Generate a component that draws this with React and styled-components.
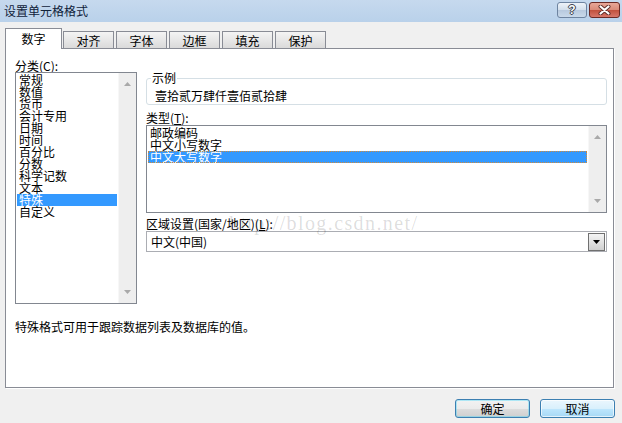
import styled, { createGlobalStyle } from 'styled-components'

const GlobalStyle = createGlobalStyle`
  html, body {
    margin: 0;
    padding: 0;
    background: #f0f0f0;
  }
  body {
    font-family: "Noto Sans CJK SC", "Liberation Sans", sans-serif;
    font-size: 12px;
    color: #000;
  }
`

const Dialog = styled.div`
  width: 622px;
  height: 423px;
  background: #f0f0f0;
  display: flex;
  flex-direction: column;
  overflow: hidden;
`

const TitleBar = styled.div`
  height: 22px;
  display: flex;
  justify-content: space-between;
  align-items: flex-start;
  padding: 0 2px 0 4px;
  background: linear-gradient(#c6d9ee, #b9d1ea);
`

const Title = styled.span`
  line-height: 22px;
  color: #10223a;
`

const Controls = styled.div`
  display: flex;
  gap: 2px;
  padding-top: 2px;
`

const HelpButton = styled.div`
  box-sizing: border-box;
  width: 30px;
  height: 16px;
  border: 1px solid #6e84a0;
  border-radius: 3px;
  background: linear-gradient(#eef3f9 0%, #d3dfec 50%, #b7c9de 51%, #c9d9ea 100%);
  display: flex;
  align-items: center;
  justify-content: center;
  font-family: "Liberation Sans", sans-serif;
  font-weight: bold;
  font-size: 12px;
  line-height: 12px;
  color: #fff;
  text-shadow: 0 0 1px #233, 1px 0 0 #445, -1px 0 0 #445, 0 1px 0 #445, 0 -1px 0 #445;
`

const CloseButton = styled.div`
  box-sizing: border-box;
  width: 31px;
  height: 16px;
  border: 1px solid #6b2a25;
  border-radius: 3px;
  background: linear-gradient(#e8a797 0%, #d98a78 50%, #c1503c 51%, #d7776a 100%);
  display: flex;
  align-items: center;
  justify-content: center;
`

const TabRow = styled.div`
  display: flex;
  align-items: flex-end;
  height: 20px;
  margin: 6px 0 0 5px;
`

const Tab = styled.div`
  box-sizing: border-box;
  width: ${p => (p.$active ? 57 : 51)}px;
  height: ${p => (p.$active ? 21 : 17)}px;
  margin-bottom: ${p => (p.$active ? -1 : 0)}px;
  margin-left: ${p => p.$gap}px;
  border: 1px solid #898c95;
  border-bottom: none;
  background: ${p => (p.$active ? '#fff' : 'linear-gradient(#f4f4f4, #dadada)')};
  display: flex;
  align-items: center;
  justify-content: center;
  line-height: 12px;
  padding-top: ${p => (p.$active ? 0 : 2)}px;
  position: relative;
  z-index: ${p => (p.$active ? 2 : 1)};
`

const Panel = styled.div`
  box-sizing: border-box;
  height: 340px;
  margin: 0 8px 0 5px;
  padding: 10px 6px 0 9px;
  background: #fff;
  border: 1px solid #898c95;
  box-shadow: 1px 1px 0 #fff;
  position: relative;
`

const Columns = styled.div`
  display: flex;
  gap: 9px;
`

const LeftCol = styled.div`
  width: 122px;
  display: flex;
  flex-direction: column;
`

const RightCol = styled.div`
  flex: 1;
  display: flex;
  flex-direction: column;
  padding-top: 13px;
`

const Label = styled.div`
  line-height: ${p => p.$lh || 13}px;
  margin-top: ${p => p.$mt || 0}px;
  white-space: nowrap;
`

const ListBox = styled.div`
  box-sizing: border-box;
  height: ${p => p.$h}px;
  border: 1px solid #828790;
  background: #fff;
  display: flex;
`

const Items = styled.div`
  flex: 1;
  padding: 1px;
`

const Item = styled.div`
  box-sizing: border-box;
  height: 12px;
  line-height: 12px;
  padding-left: 2px;
  white-space: nowrap;
  background: ${p => (p.$selected ? '#3399ff' : 'transparent')};
  color: ${p => (p.$selected ? '#fff' : '#000')};
  outline: ${p => (p.$focus ? '1px dotted #d08a3c' : 'none')};
  outline-offset: -1px;
`

const ScrollBar = styled.div`
  width: 17px;
  background: #eeeeee;
  border-left: 1px solid #f7f7f7;
  display: flex;
  flex-direction: column;
  justify-content: space-between;
  align-items: center;
  padding: 9px 0;
`

const Example = styled.fieldset`
  margin: 0;
  min-width: 0;
  padding: 6px 8px 2px 8px;
  border: 1px solid #d5dfe5;
  border-radius: 3px;
`

const Legend = styled.legend`
  padding: 0 1px;
  margin-left: -4px;
  line-height: 12px;
`

const ExampleValue = styled.div`
  line-height: 12px;
`

const Select = styled.div`
  box-sizing: border-box;
  height: 21px;
  border: 1px solid #abadb3;
  background: #fff;
  display: flex;
  align-items: center;
  justify-content: space-between;
  padding: 0 1px 0 4px;
`

const DropButton = styled.div`
  box-sizing: border-box;
  width: 17px;
  height: 18px;
  border: 1px solid #707070;
  background: linear-gradient(#f4f4f4, #d0d0d0);
  display: flex;
  align-items: center;
  justify-content: center;
`

const Description = styled.div`
  margin-top: 16px;
  line-height: 13px;
`

const Watermark = styled.div`
  position: absolute;
  left: 223px;
  top: 164px;
  font-family: "Liberation Serif", serif;
  font-size: 20px;
  line-height: 20px;
  letter-spacing: 1.4px;
  color: rgba(0, 0, 0, 0.14);
  pointer-events: none;
`

const Footer = styled.div`
  display: flex;
  justify-content: flex-end;
  gap: 10px;
  padding: 11px 7px 0 0;
`

const Button = styled.button`
  box-sizing: border-box;
  width: 75px;
  height: 19px;
  padding: 0;
  border: 1px solid #3c7fb1;
  border-radius: 3px;
  font-family: inherit;
  font-size: 12px;
  line-height: 12px;
  color: #000;
  background: ${p =>
    p.$hover
      ? 'linear-gradient(#eaf6fd 0%, #d9f0fc 50%, #bee6fd 51%, #a7d9f5 100%)'
      : 'linear-gradient(#f2f2f2 0%, #ebebeb 50%, #dddddd 51%, #cfcfcf 100%)'};
  box-shadow: inset 0 0 0 1px ${p => (p.$hover ? '#ffffffaa' : '#48d7fb66')};
`

const UpArrow = () => (
  <svg width="7" height="4" viewBox="0 0 7 4">
    <path d="M0 4 L3.5 0 L7 4 Z" fill="#a9a9a9" />
  </svg>
)

const DownArrow = () => (
  <svg width="7" height="4" viewBox="0 0 7 4">
    <path d="M0 0 L7 0 L3.5 4 Z" fill="#a9a9a9" />
  </svg>
)

const categories = ['常规', '数值', '货币', '会计专用', '日期', '时间', '百分比', '分数', '科学记数', '文本', '特殊', '自定义']
const types = ['邮政编码', '中文小写数字', '中文大写数字']
const tabs = ['数字', '对齐', '字体', '边框', '填充', '保护']

export default function App() {
  return (
    <Dialog>
      <GlobalStyle />
      <TitleBar>
        <Title>设置单元格格式</Title>
        <Controls>
          <HelpButton>?</HelpButton>
          <CloseButton>
            <svg width="13" height="10" viewBox="0 0 13 10">
              <path d="M2.5 1.5 L10.5 8.5 M10.5 1.5 L2.5 8.5" stroke="#5a2a26" strokeWidth="4" strokeLinecap="round" />
              <path d="M2.5 1.5 L10.5 8.5 M10.5 1.5 L2.5 8.5" stroke="#fff" strokeWidth="2.2" strokeLinecap="round" />
            </svg>
          </CloseButton>
        </Controls>
      </TitleBar>

      <TabRow>
        {tabs.map((t, i) => (
          <Tab key={t} $active={i === 0} $gap={i === 0 ? 0 : i === 1 ? 1 : 2}>
            {t}
          </Tab>
        ))}
      </TabRow>

      <Panel>
        <Columns>
          <LeftCol>
            <Label>分类(<u>C</u>):</Label>
            <ListBox $h={232}>
              <Items>
                {categories.map(c => (
                  <Item key={c} $selected={c === '特殊'}>{c}</Item>
                ))}
              </Items>
              <ScrollBar>
                <UpArrow />
                <DownArrow />
              </ScrollBar>
            </ListBox>
          </LeftCol>

          <RightCol>
            <Example>
              <Legend>示例</Legend>
              <ExampleValue>壹拾贰万肆仟壹佰贰拾肆</ExampleValue>
            </Example>
            <Label $lh={14} $mt={6}>类型(<u>T</u>):</Label>
            <ListBox $h={88}>
              <Items>
                {types.map(t => (
                  <Item key={t} $selected={t === '中文大写数字'} $focus={t === '中文大写数字'}>{t}</Item>
                ))}
              </Items>
              <ScrollBar>
                <UpArrow />
                <DownArrow />
              </ScrollBar>
            </ListBox>
            <Label $lh={14} $mt={4}>区域设置(国家/地区)(<u>L</u>):</Label>
            <Select>
              <span>中文(中国)</span>
              <DropButton>
                <svg width="7" height="4" viewBox="0 0 7 4">
                  <path d="M0 0 L7 0 L3.5 4 Z" fill="#000" />
                </svg>
              </DropButton>
            </Select>
          </RightCol>
        </Columns>

        <Description>特殊格式可用于跟踪数据列表及数据库的值。</Description>
        <Watermark>http://blog.csdn.net/</Watermark>
      </Panel>

      <Footer>
        <Button>确定</Button>
        <Button $hover>取消</Button>
      </Footer>
    </Dialog>
  )
}
